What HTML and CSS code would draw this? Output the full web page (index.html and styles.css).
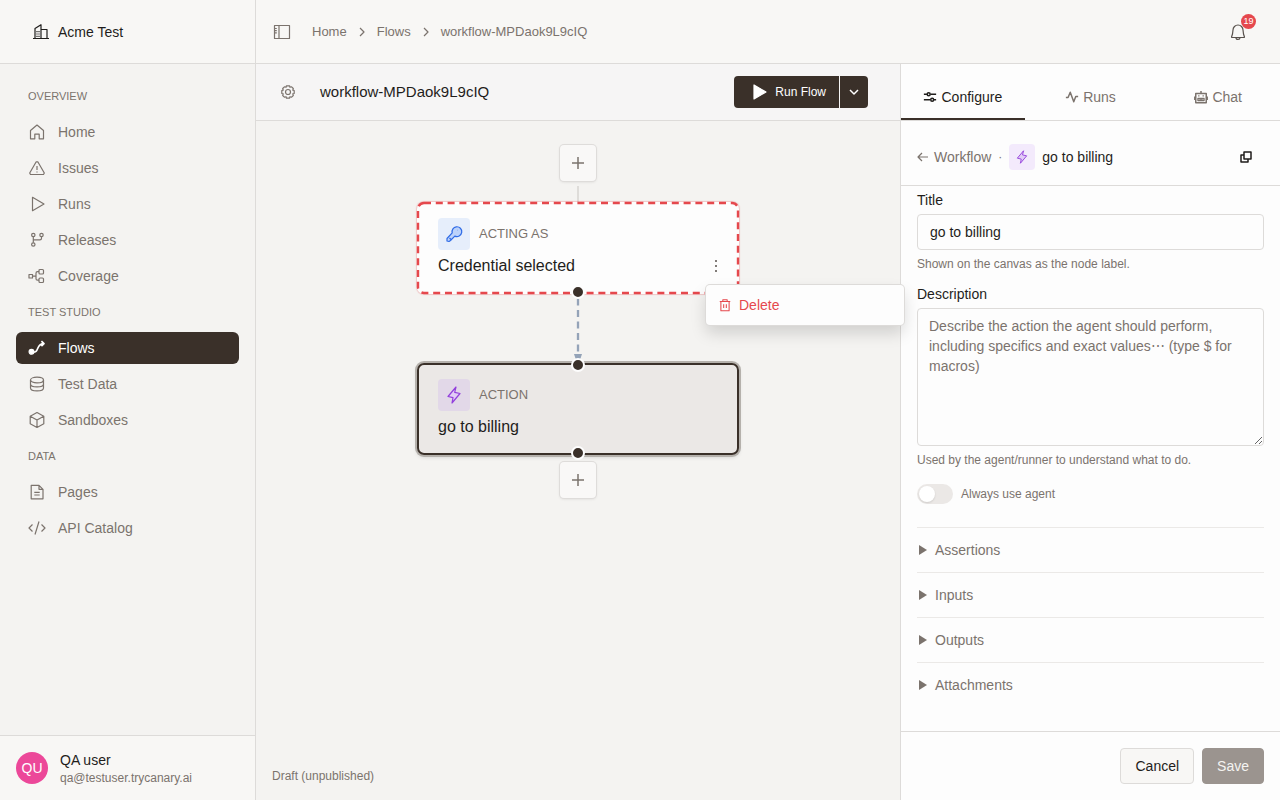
FILE: index.html
```html
<!DOCTYPE html>
<html lang="en">
<head>
  <meta charset="UTF-8" />
  <meta name="viewport" content="width=device-width, initial-scale=1.0" />
  <title>workflow-MPDaok9L9cIQ</title>
  <link rel="stylesheet" href="styles.css">
</head>
<body>
  <div class="app">
    <aside class="sidebar">
      <div class="org">
        <svg class="icon" viewBox="0 0 18 18"><path d="M1 15.500h16M3 15.500V5.500L9 1.700v13.800M9 6.500h6v9M5 8v1.200M7 8v1.200M5 10.400v1.200M7 10.400v1.200M5 12.800V14M7 12.800V14"/></svg>
        <span>Acme Test</span>
      </div>

      <nav class="nav">
        <h2>OVERVIEW</h2>
        <a href="#"><svg class="icon" viewBox="0 0 18 18"><path d="M2.500 7.500L9 2l6.500 5.500v8.300h-4.300v-4.600H6.800v4.600H2.500z"/></svg>Home</a>
        <a href="#"><svg class="icon" viewBox="0 0 18 18"><path d="M8.200 2.800h1.600L16.300 14l-.8 1.500h-13L1.700 14zM9 7v4M9 12.400v1.200"/></svg>Issues</a>
        <a href="#"><svg class="icon" viewBox="0 0 18 18"><path d="M4.500 2.300v13.400L16 9z"/></svg>Runs</a>
        <a href="#"><svg class="icon" viewBox="0 0 18 18"><circle cx="5.300" cy="4" r="1.700"/><circle cx="5.300" cy="13.500" r="1.700"/><circle cx="13.500" cy="4" r="1.700"/><path d="M5.300 5.700v6.100M13.500 5.700v1.500q0 1.600-1.600 1.600H5.300"/></svg>Releases</a>
        <a href="#"><svg class="icon" viewBox="0 0 18 18"><rect x="1" y="7.500" width="3.500" height="3.500"/><rect x="11" y="2.500" width="4.500" height="4.500" rx="1"/><rect x="11" y="11" width="4.500" height="4.500" rx="1"/><path d="M4.500 9.200H8M11 4.700H9.500Q8 4.700 8 6.200v5.500q0 1.500 1.500 1.500H11"/></svg>Coverage</a>

        <h2>TEST STUDIO</h2>
        <a href="#" class="active"><svg class="icon" viewBox="0 0 18 18"><circle class="solid" cx="3.500" cy="12.800" r="2.400"/><path class="heavy" d="M3.500 13c9 1.500 3.500-8.300 12.500-8.300M13.400 2.200L16 4.700l-2.600 2.500"/></svg>Flows</a>
        <a href="#"><svg class="icon" viewBox="0 0 18 18"><ellipse cx="9" cy="5" rx="6.500" ry="2.900"/><path d="M2.500 5v4c0 1.600 2.900 2.900 6.500 2.900s6.500-1.300 6.500-2.900V5M2.500 9v4c0 1.600 2.900 2.900 6.500 2.900s6.500-1.300 6.500-2.900V9"/></svg>Test Data</a>
        <a href="#"><svg class="icon" viewBox="0 0 18 18"><path d="M9 1.500l6.800 3.700v7.600L9 16.500l-6.800-3.700V5.200zM2.200 5.200L9 9l6.800-3.800M9 9v7.500"/></svg>Sandboxes</a>

        <h2>DATA</h2>
        <a href="#"><svg class="icon" viewBox="0 0 18 18"><path d="M3.200 2.300h7.800l4 4v9.500H3.200zM11 2.300v4h4M6.300 9.300h5.400M6.300 12h5.400"/></svg>Pages</a>
        <a href="#"><svg class="icon" viewBox="0 0 18 18"><path d="M4.500 5.500L1 9l3.500 3.500M13.500 5.500L17 9l-3.500 3.500M11 2.500L7 15.500"/></svg>API Catalog</a>
      </nav>

      <div class="account">
        <span class="avatar">QU</span>
        <div>
          <div class="account-name">QA user</div>
          <div class="account-email">qa@testuser.trycanary.ai</div>
        </div>
      </div>
    </aside>

    <div class="page">
      <header class="topbar">
        <button class="icon-button" aria-label="Toggle sidebar">
          <svg class="icon" viewBox="0 0 18 18"><path d="M1.500 2.500h15v13h-15zM6 2.500v13M2 5.500h1.800M2 7.700h1.800M2 9.900h1.800"/></svg>
        </button>
        <nav class="breadcrumbs" aria-label="Breadcrumb">
          <a href="#">Home</a>
          <svg class="chevron" viewBox="0 0 16 16"><path d="M6 4l4 4-4 4"/></svg>
          <a href="#">Flows</a>
          <svg class="chevron" viewBox="0 0 16 16"><path d="M6 4l4 4-4 4"/></svg>
          <span>workflow-MPDaok9L9cIQ</span>
        </nav>
        <button class="icon-button bell" aria-label="Notifications">
          <svg class="icon" viewBox="0 0 18 18"><path d="M3 14.500q-.6 0-.4-.8l.9-2.700.5-4a5 5 0 0 1 10 0l.5 4 .9 2.700q.2.800-.4.800zM7 14.700a2 1.700 0 0 0 4 0"/></svg>
          <span class="badge">19</span>
        </button>
      </header>

      <div class="workspace">
        <main class="editor">
          <div class="toolbar">
            <button class="icon-button" aria-label="Flow settings">
              <svg class="icon small" viewBox="0 0 16 16"><circle cx="8" cy="8" r="2.500"/><path d="M6.500 1.800h3l.5 1.500 1.600-.5 1.700 1.700-.5 1.600 1.400.4v3l-1.400.4.5 1.600-1.700 1.700-1.600-.5-.5 1.500h-3L6 12.700l-1.600.5-1.700-1.700.5-1.600-1.400-.4v-3l1.400-.4-.5-1.600 1.700-1.700 1.600.5z"/></svg>
            </button>
            <h1>workflow-MPDaok9L9cIQ</h1>
            <div class="run-group">
              <button class="run"><svg class="play" viewBox="0 0 14 16"><path d="M1 1v14l12-7z"/></svg>Run Flow</button>
              <button class="run-more" aria-label="Run options"><svg class="icon small" viewBox="0 0 16 16"><path class="bold" d="M4 6l4 4 4-4"/></svg></button>
            </div>
          </div>

          <div class="canvas">
            <button class="add" aria-label="Add step at start"><svg viewBox="0 0 16 16"><path d="M8 2v12M2 8h12"/></svg></button>
            <div class="stem"></div>

            <section class="node node-invalid">
              <svg class="dashes"><rect width="100%" height="100%" rx="6"/></svg>
              <div class="node-head">
                <span class="tile tile-blue"><svg class="icon" viewBox="0 0 18 18"><path d="M11.300 1.800a4.900 4.900 0 1 1-1.500 9.300L5.500 15.500 4 16.500l-2-.5v-2.500L7.200 7.800a4.900 4.900 0 0 1 4.100-6zM4.500 13l1.500 1.500"/><path class="bold" d="M12.800 5.300h.2"/></svg></span>
                <span>ACTING AS</span>
              </div>
              <div class="node-title">
                <span>Credential selected</span>
                <button class="kebab" aria-label="Node menu"><svg viewBox="0 0 4 16"><circle cx="2" cy="3" r="1"/><circle cx="2" cy="8" r="1"/><circle cx="2" cy="13" r="1"/></svg></button>
              </div>
              <span class="handle handle-bottom"></span>
              <div class="menu">
                <button><svg class="icon small" viewBox="0 0 16 16"><path d="M2 4h12M5.500 4V2h5v2M3.300 4v10.500h9.400V4M6.500 7v4.500M9.500 7v4.500"/></svg>Delete</button>
              </div>
            </section>

            <svg class="edge" viewBox="0 0 12 69"><path class="edge-line" d="M6 4.500v56"/><path class="edge-arrow" d="M2 60h8L8 66H4z"/></svg>

            <section class="node node-selected">
              <span class="handle handle-top"></span>
              <div class="node-head">
                <span class="tile tile-purple"><svg class="icon" viewBox="0 0 18 18"><path d="M11 1L3 10.500l5 1.200L7 17l8-9.500-5.300-1.200z"/></svg></span>
                <span>ACTION</span>
              </div>
              <div class="node-title"><span>go to billing</span></div>
              <span class="handle handle-bottom"></span>
            </section>

            <button class="add add-end" aria-label="Add step at end"><svg viewBox="0 0 16 16"><path d="M8 2v12M2 8h12"/></svg></button>
            <p class="status">Draft (unpublished)</p>
          </div>
        </main>

        <aside class="panel">
          <div class="tabs" role="tablist">
            <button role="tab" class="current" aria-selected="true"><svg class="icon small" viewBox="0 0 16 16"><path class="heavy" d="M1 4.800h3.500M8.500 4.800H15M1 11.200h7M12.500 11.200H15"/><circle class="heavy" cx="6.500" cy="4.800" r="1.700"/><circle class="heavy" cx="10.500" cy="11.200" r="1.700"/></svg>Configure</button>
            <button role="tab"><svg class="icon small" viewBox="0 0 16 16"><path class="heavy" d="M1 8.500h2.500L6 2.500l4 11 2.300-6H15"/></svg>Runs</button>
            <button role="tab"><svg class="icon small" viewBox="0 0 16 16"><path class="heavy" d="M2 4h12v10.500H2zM8 4V1"/><path class="bold" d="M.8 7.500v4M15.200 7.500v4M5.500 6v1.500M10.500 6v1.500M4.500 9.500h7v2.500h-7zM7 9.500V12M9 9.500V12"/></svg>Chat</button>
          </div>

          <div class="panel-head">
            <a href="#"><svg class="back" viewBox="0 0 12 12"><path d="M5 2L1 6l4 4M1 6h10"/></svg>Workflow</a>
            <span class="dot">·</span>
            <span class="tile tile-small"><svg class="icon small" viewBox="0 0 18 18"><path d="M11 1L3 10.500l5 1.200L7 17l8-9.500-5.300-1.200z"/></svg></span>
            <span class="panel-title">go to billing</span>
            <button class="icon-button" aria-label="Copy node"><svg class="icon small" viewBox="0 0 16 16"><path class="bold" d="M6 3h7v7H6zM6 6H3v7h7v-3"/></svg></button>
          </div>

          <form class="panel-body">
            <label for="title">Title</label>
            <input type="text" id="title" value="go to billing" />
            <p class="hint">Shown on the canvas as the node label.</p>

            <label for="description">Description</label>
            <textarea id="description" placeholder="Describe the action the agent should perform, including specifics and exact values⋯ (type $ for macros)"></textarea>
            <p class="hint">Used by the agent/runner to understand what to do.</p>

            <label class="switch"><input type="checkbox" />Always use agent</label>

            <details><summary>Assertions</summary></details>
            <details><summary>Inputs</summary></details>
            <details><summary>Outputs</summary></details>
            <details><summary>Attachments</summary></details>
          </form>

          <div class="panel-footer">
            <button class="cancel">Cancel</button>
            <button class="save" disabled>Save</button>
          </div>
        </aside>
      </div>
    </div>
  </div>
</body>
</html>
```

FILE: styles.css
```css
:root {
  --bg: #f4f3f1;
  --bar: #f8f7f5;
  --panel: #fdfdfd;
  --border: #dddbd9;
  --text: #1f1d1b;
  --muted: #7b736d;
  --dark: #3a3029;
  --red: #e5484d;
  --purple: #9340dc;
}

* {
  margin: 0;
  padding: 0;
  box-sizing: border-box;
}

body {
  background: var(--bg);
  color: var(--text);
  font: 14px/20px "Liberation Sans", Arial, sans-serif;
}

button,
input,
textarea {
  font: inherit;
  color: inherit;
}

button {
  border: none;
  background: none;
  cursor: pointer;
}

a {
  color: inherit;
  text-decoration: none;
}

svg {
  display: block;
  flex: none;
  fill: none;
  stroke: currentColor;
  stroke-width: 1.2;
  stroke-linejoin: round;
}

.icon {
  width: 18px;
  height: 18px;
}

.icon.small {
  width: 16px;
  height: 16px;
}

.bold {
  stroke-width: 1.5;
}

.heavy {
  stroke-width: 1.7;
}

.solid {
  fill: currentColor;
}

.app {
  display: flex;
  height: 100vh;
}

/* Sidebar */
.sidebar {
  width: 256px;
  flex: none;
  display: flex;
  flex-direction: column;
  border-right: 1px solid var(--border);
}

.org {
  display: flex;
  align-items: center;
  gap: 8px;
  height: 64px;
  padding: 0 32px;
  background: var(--bar);
  border-bottom: 1px solid var(--border);
}

.nav {
  flex: 1;
  display: flex;
  flex-direction: column;
  gap: 4px;
  padding: 16px;
  overflow-y: auto;
  color: var(--muted);
}

.nav h2 {
  padding: 0 12px;
  font-size: 11px;
  font-weight: normal;
  line-height: 32px;
}

.nav a {
  display: flex;
  align-items: center;
  gap: 12px;
  height: 32px;
  padding: 0 12px;
  border-radius: 6px;
}

.nav a.active {
  background: var(--dark);
  color: #fff;
}

.account {
  display: flex;
  align-items: center;
  gap: 12px;
  height: 65px;
  padding: 0 16px;
  background: var(--bar);
  border-top: 1px solid var(--border);
}

.avatar {
  width: 32px;
  height: 32px;
  border-radius: 50%;
  background: #ec4899;
  color: #fff;
  line-height: 32px;
  text-align: center;
}

.account-email {
  color: var(--muted);
  font-size: 12px;
  line-height: 16px;
}

/* Top bar */
.page {
  flex: 1;
  min-width: 0;
  display: flex;
  flex-direction: column;
}

.topbar {
  display: flex;
  align-items: center;
  height: 64px;
  padding: 0 24px 0 8px;
  background: var(--bar);
  border-bottom: 1px solid var(--border);
  color: var(--muted);
}

.icon-button {
  display: grid;
  place-items: center;
  width: 36px;
  height: 36px;
}

.breadcrumbs {
  flex: 1;
  display: flex;
  align-items: center;
  gap: 7px;
  padding-left: 12px;
  font-size: 13px;
}

.chevron {
  width: 16px;
  height: 16px;
}

.bell {
  position: relative;
  color: #57504b;
}

.badge {
  position: absolute;
  top: 0;
  right: 0;
  width: 15px;
  height: 15px;
  border-radius: 50%;
  background: var(--red);
  color: #fff;
  font-size: 9px;
  line-height: 15px;
  text-align: center;
}

.workspace {
  flex: 1;
  min-height: 0;
  display: flex;
}

/* Flow editor */
.editor {
  flex: 1;
  min-width: 0;
  display: flex;
  flex-direction: column;
}

.toolbar {
  display: flex;
  align-items: center;
  gap: 14px;
  height: 57px;
  padding: 0 32px 0 14px;
  background: #f6f5f5;
  border-bottom: 1px solid var(--border);
}

.toolbar .icon-button {
  color: var(--muted);
}

.toolbar h1 {
  flex: 1;
  font-size: 15px;
  font-weight: normal;
}

.run-group {
  display: flex;
  gap: 1px;
  color: #fff;
}

.run,
.run-more {
  display: flex;
  align-items: center;
  height: 32px;
  background: var(--dark);
}

.run {
  gap: 8px;
  padding: 0 13px 0 19px;
  border-radius: 4px 0 0 4px;
  font-size: 12px;
}

.run-more {
  padding: 0 6px;
  border-radius: 0 4px 4px 0;
}

.play {
  width: 14px;
  height: 16px;
  fill: currentColor;
}

.canvas {
  flex: 1;
  display: flex;
  flex-direction: column;
  align-items: center;
  padding: 24px 16px 14px;
}

.add {
  display: grid;
  place-items: center;
  width: 36px;
  height: 36px;
  border-radius: 4px;
  background: #f9f8f7;
  box-shadow: 0 0 0 1px #dedcda, 0 1px 3px rgba(0, 0, 0, 0.12);
  color: var(--muted);
}

.add svg {
  width: 16px;
  height: 16px;
  stroke-width: 1.5;
}

.add-end {
  margin-top: 7px;
}

.stem {
  width: 2px;
  height: 16px;
  margin-top: 5px;
  background: #dedcd9;
}

.node {
  position: relative;
  width: 322px;
  padding: 16px 21px;
  border-radius: 7px;
}

.node-invalid {
  background: var(--panel);
  box-shadow: 0 0 1px 1px rgba(229, 72, 77, 0.25);
}

.node-selected {
  background: #ebe8e6;
  box-shadow: inset 0 0 0 2px var(--dark), 0 0 0 2px #b5b1ac, 0 2px 4px rgba(0, 0, 0, 0.15);
}

/* Dashed outline drawn along the middle of a 2px border */
.dashes {
  position: absolute;
  top: 1px;
  left: 1px;
  width: calc(100% - 2px);
  height: calc(100% - 2px);
  overflow: visible;
  stroke: var(--red);
  stroke-width: 2.4;
  stroke-dasharray: 7 4.8;
}

.node-head {
  display: flex;
  align-items: center;
  gap: 9px;
  color: var(--muted);
  font-size: 13px;
}

.tile {
  display: grid;
  place-items: center;
  width: 32px;
  height: 32px;
  border-radius: 4px;
}

.tile-blue {
  background: #e6eefb;
  color: #2f6be6;
}

.tile-blue svg {
  fill: #bcd2fa;
}

.tile-purple {
  background: #e2d8e8;
  color: var(--purple);
}

.tile-small {
  width: 26px;
  height: 26px;
  background: #f3eafc;
  color: var(--purple);
}

.tile-purple svg,
.tile-small svg {
  fill: #e2cdf6;
}

.tile-small .icon.small {
  width: 14px;
  height: 14px;
}

.node-title {
  display: flex;
  justify-content: space-between;
  margin-top: 4px;
  font-size: 16px;
  line-height: 24px;
}

.kebab svg {
  width: 4px;
  height: 16px;
  fill: #57504b;
  stroke: none;
}

.handle {
  position: absolute;
  left: 50%;
  width: 14px;
  height: 14px;
  border: 2px solid #fdfdfd;
  border-radius: 50%;
  background: var(--dark);
  transform: translateX(-50%);
}

.handle-top {
  top: -5px;
}

.handle-bottom {
  bottom: -5px;
}

.edge {
  width: 12px;
  height: 69px;
}

.edge-line {
  stroke: #94a3b8;
  stroke-width: 2.3;
  stroke-dasharray: 7 4.500;
}

.edge-arrow {
  fill: #94a3b8;
  stroke: none;
}

.menu {
  position: absolute;
  top: 83px;
  right: -165px;
  z-index: 2;
  width: 198px;
  padding: 4px;
  border-radius: 4px;
  background: var(--panel);
  box-shadow: 0 0 0 1px #dddbd9, 0 8px 16px rgba(0, 0, 0, 0.15);
  color: var(--red);
}

.menu button {
  display: flex;
  align-items: center;
  gap: 6px;
  width: 100%;
  height: 32px;
  padding: 0 7px;
}

.menu .icon {
  width: 16px;
  height: 14px;
}

.status {
  align-self: flex-start;
  margin-top: auto;
  color: var(--muted);
  font-size: 12px;
}

/* Right panel */
.panel {
  width: 380px;
  flex: none;
  display: flex;
  flex-direction: column;
  background: var(--panel);
  border-left: 1px solid var(--border);
}

.tabs {
  display: flex;
  gap: 4px;
  height: 57px;
  border-bottom: 1px solid var(--border);
}

.tabs button {
  flex: 1;
  display: flex;
  align-items: center;
  justify-content: center;
  gap: 4px;
  padding-top: 12px;
  border-bottom: 2px solid transparent;
  color: var(--muted);
}

.tabs .current {
  border-color: var(--dark);
  color: var(--text);
}

.tabs .icon.small {
  width: 14px;
  height: 14px;
}

.panel-head {
  display: flex;
  align-items: center;
  gap: 7px;
  height: 65px;
  padding: 8px 16px 0;
  border-bottom: 1px solid var(--border);
  color: var(--muted);
}

.panel-head a {
  display: flex;
  align-items: center;
  gap: 5px;
}

.dot {
  font-size: 12px;
}

.back {
  width: 12px;
  height: 12px;
}

.panel-title {
  flex: 1;
  color: var(--text);
}

.panel-head .icon-button {
  color: var(--text);
}

.panel-body {
  flex: 1;
  display: flex;
  flex-direction: column;
  padding: 4px 16px 16px;
  overflow-y: auto;
}

.panel-body input[type="text"],
.panel-body textarea {
  width: 100%;
  margin-top: 4px;
  padding: 0 12px;
  border: 1px solid var(--border);
  border-radius: 4px;
  background: var(--panel);
}

.panel-body input[type="text"] {
  height: 36px;
}

.panel-body textarea {
  height: 138px;
  padding: 7px 11px;
  flex: none;
}

.panel-body textarea::placeholder {
  color: var(--muted);
}

.hint {
  margin: 4px 0 10px;
  color: var(--muted);
  font-size: 12px;
}

.switch {
  display: flex;
  align-items: center;
  gap: 8px;
  margin: 4px 0 23px;
  color: var(--muted);
  font-size: 12px;
}

.switch input {
  appearance: none;
  width: 36px;
  height: 20px;
  padding: 2px;
  border-radius: 10px;
  background: #ebe8e6;
}

.switch input::before {
  content: "";
  display: block;
  width: 16px;
  height: 16px;
  border-radius: 50%;
  background: #fff;
  box-shadow: 0 1px 2px rgba(0, 0, 0, 0.12);
}

.switch input:checked::before {
  margin-left: auto;
}

details {
  border-top: 1px solid #ebe9e7;
  color: var(--muted);
}

summary {
  display: flex;
  align-items: center;
  gap: 8px;
  height: 44px;
  padding-left: 2px;
  cursor: pointer;
}

summary::before {
  content: "";
  border-left: 8px solid var(--muted);
  border-top: 5px solid transparent;
  border-bottom: 5px solid transparent;
}

.panel-footer {
  display: flex;
  justify-content: flex-end;
  gap: 8px;
  padding: 16px;
  border-top: 1px solid var(--border);
}

.panel-footer button {
  height: 36px;
  padding: 0 14px;
  border: 1px solid var(--border);
  border-radius: 4px;
}

.cancel {
  background: var(--bar);
}

.panel-footer .save {
  border-color: #9b948f;
  background: #9b948f;
  color: #f4f3f1;
}
```
